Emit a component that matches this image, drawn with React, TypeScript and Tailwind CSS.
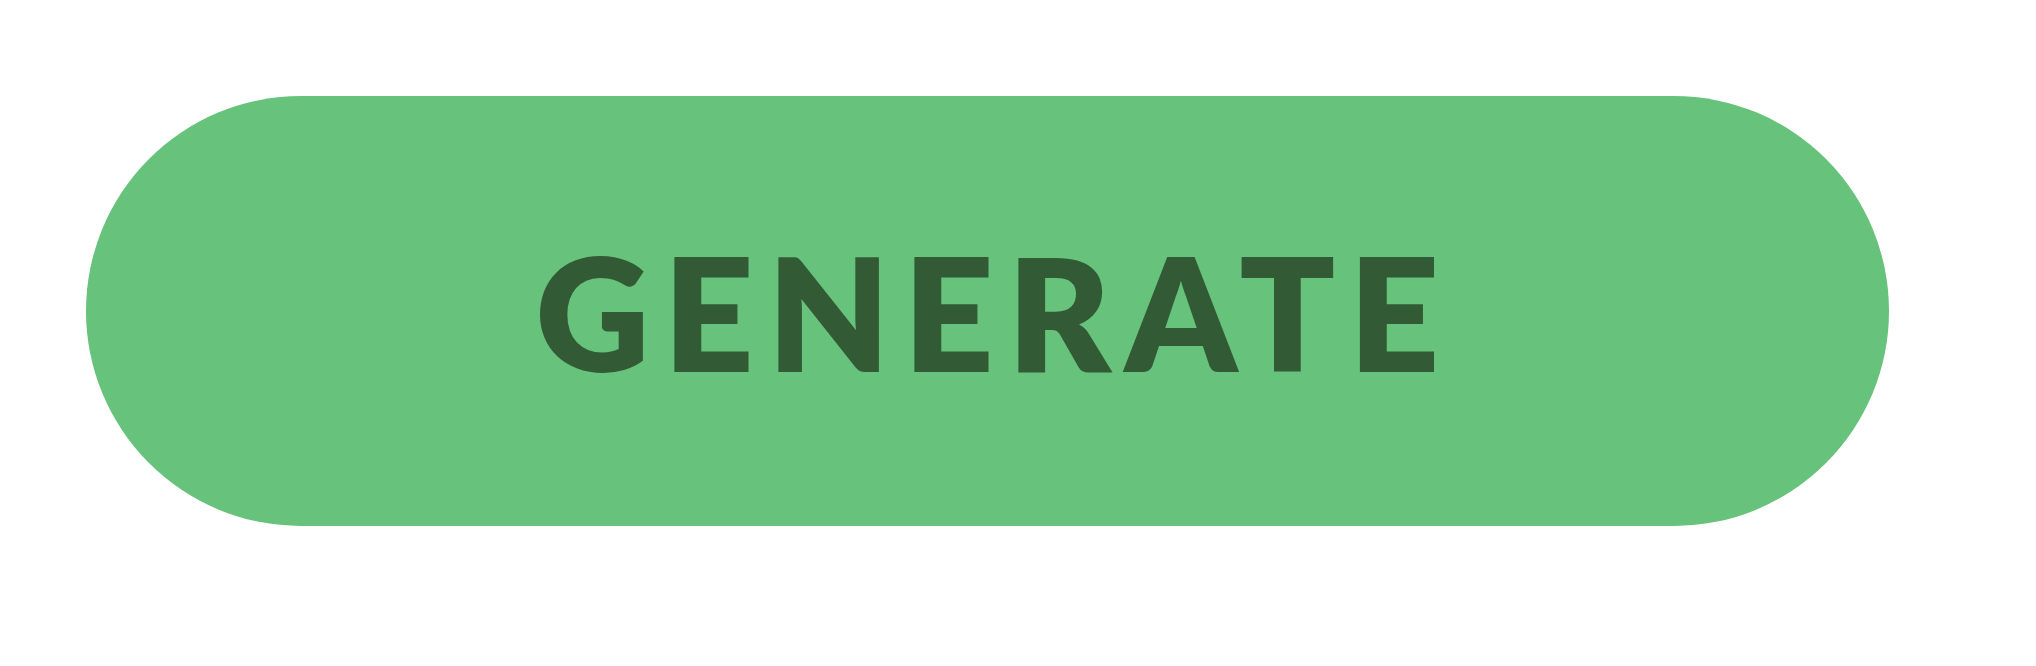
export default function App() {
  return (
    <div className="min-h-[666px] w-full bg-white pl-[86px] pt-[96px]">
      <button
        type="button"
        className="flex h-[430px] w-[1803px] items-center justify-center rounded-full bg-[#67c27c] font-['Lato','Liberation_Sans',sans-serif] text-[158px] font-extrabold leading-none tracking-[0.085em] text-[#325b35]"
      >
        <span className="pl-[0.085em]">GENERATE</span>
      </button>
    </div>
  )
}
